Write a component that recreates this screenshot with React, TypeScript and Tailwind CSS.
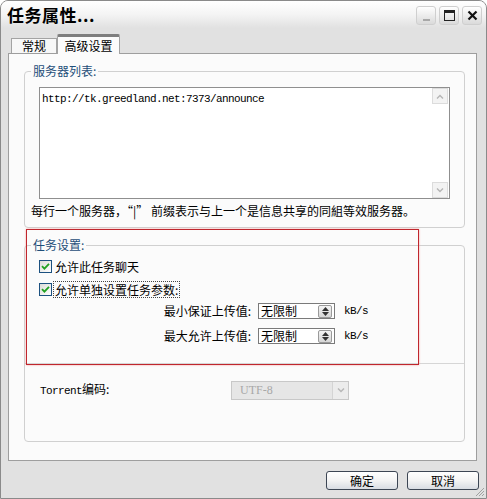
import React from "react";

const CheckBox = () => (
  <span className="w-[13px] h-[13px] shrink-0 border border-[#1c5180] bg-linear-to-br from-[#dcdcd7] to-white flex items-center justify-center">
    <svg width="9" height="9" viewBox="0 0 9 9">
      <path d="M1 4.2 L3.4 6.6 L8 1.8" stroke="#21a121" strokeWidth="1.8" fill="none" />
    </svg>
  </span>
);

const SpinButton = () => (
  <span className="w-[14px] h-[13px] mr-[2px] rounded-[2px] border border-[#9a9a9a] bg-linear-to-b from-[#f4f4f4] to-[#d6d6d6] flex flex-col items-center justify-center gap-[1px]">
    <svg width="7" height="4" viewBox="0 0 7 4"><path d="M0 4 L3.5 0 L7 4Z" fill="#333" /></svg>
    <svg width="7" height="4" viewBox="0 0 7 4"><path d="M0 0 L3.5 4 L7 0Z" fill="#333" /></svg>
  </span>
);

const SpinRow = ({ label }: { label: string }) => (
  <div className="flex items-center h-[16px]">
    <span className="w-[227px] text-right pr-[1px] leading-[16px]">{label}</span>
    <div className="ml-[6px] w-[77px] h-[16px] border border-[#7a7a7a] bg-white flex items-center justify-between">
      <span className="pl-[2px] leading-[14px]">无限制</span>
      <SpinButton />
    </div>
    <span className="ml-[9px] font-['Liberation_Mono',monospace] text-[11px] tracking-[-0.6px]">kB/s</span>
  </div>
);

const GroupLabel = ({ children }: { children: React.ReactNode }) => (
  <span className="absolute -top-[8px] left-[6px] px-[2px] bg-[#fbfbfb] text-[#1f4e79] leading-[14px]">{children}</span>
);

const TitleButton = ({ children }: { children: React.ReactNode }) => (
  <span className="w-[20px] h-[19px] rounded-[3px] border border-[#cfcfcf] bg-linear-to-b from-white to-[#dadada] flex items-center justify-center">
    {children}
  </span>
);

export default function App() {
  return (
    <div className="w-[487px] h-[499px] bg-white">
      <div className="relative w-[487px] h-[499px] border border-[#8a8a8a] rounded-t-[8px] bg-[#e1e1e1] overflow-hidden flex flex-col font-['Noto_Sans_CJK_SC',sans-serif] text-[12px] text-black">
        {/* title bar */}
        <div className="h-[27px] shrink-0 flex items-center justify-between pl-[6px] pr-[4px] bg-linear-to-b from-white via-[#f4f4f4] to-[#e1e1e1]">
          <span className="text-[17px] font-bold leading-[20px] tracking-[0.5px]">任务属性...</span>
          <div className="flex items-center gap-[3px] pt-[1px]">
            <TitleButton>
              <span className="w-[7px] h-[2px] bg-[#a8a8a8] mt-[9px]" />
            </TitleButton>
            <TitleButton>
              <span className="w-[11px] h-[11px] border border-[#222] border-t-[3px]" />
            </TitleButton>
            <TitleButton>
              <svg width="11" height="11" viewBox="0 0 11 11">
                <path d="M1.5 1.5 L9.5 9.5 M9.5 1.5 L1.5 9.5" stroke="#111" strokeWidth="2.2" />
              </svg>
            </TitleButton>
          </div>
        </div>

        {/* body */}
        <div className="flex-1 flex flex-col px-[7px] pt-[6px]">
          {/* tabs */}
          <div className="flex items-end pl-[3px] h-[19px]">
            <div className="w-[46px] h-[15px] border border-b-0 border-[#a3a3a3] bg-[#f7f7f7] flex items-center justify-center leading-[14px]">常规</div>
            <div className="relative z-10 -mb-px w-[63px] h-[20px] border-x border-[#a3a3a3] border-t-[3px] border-t-[#7e7e7e] rounded-t-[2px] bg-[#fbfbfb] flex items-center justify-center leading-[14px]">高级设置</div>
          </div>

          {/* panel */}
          <div className="relative w-[469px] h-[408px] border border-[#9e9e9e] bg-[#fbfbfb] px-[15px] pt-[17px] flex flex-col">
            {/* servers */}
            <div className="relative w-[441px] h-[157px] border border-[#d0d0d0] rounded-[4px] pt-[15px] pl-[14px]">
              <GroupLabel>服务器列表:</GroupLabel>
              <div className="w-[411px] h-[112px] border border-[#8f8f8f] bg-white flex">
                <div className="flex-1 pl-[2px] pt-[4px] font-['Liberation_Mono',monospace] text-[11px] tracking-[-0.6px] leading-[14px]">
                  http://tk.greedland.net:7373/announce
                </div>
                <div className="w-[17px] flex flex-col justify-between py-[0px] pr-[1px]">
                  <span className="w-[16px] h-[16px] border border-[#dcdcdc] bg-[#f3f3f3] flex items-center justify-center">
                    <svg width="8" height="5" viewBox="0 0 8 5"><path d="M1 4.5 L4 1.5 L7 4.5" stroke="#b5b5b5" strokeWidth="1.4" fill="none" /></svg>
                  </span>
                  <span className="w-[16px] h-[16px] border border-[#dcdcdc] bg-[#f3f3f3] flex items-center justify-center">
                    <svg width="8" height="5" viewBox="0 0 8 5"><path d="M1 0.5 L4 3.5 L7 0.5" stroke="#b5b5b5" strokeWidth="1.4" fill="none" /></svg>
                  </span>
                </div>
              </div>
              <p className="-ml-[8px] mt-[5px] leading-[14px] whitespace-nowrap">每行一个服务器，“|” 前缀表示与上一个是信息共享的同組等效服务器。</p>
            </div>

            {/* task settings */}
            <div className="relative mt-[17px] w-[441px] h-[197px] border border-[#d0d0d0] rounded-[4px] flex flex-col">
              <GroupLabel>任务设置:</GroupLabel>
              <div className="pl-[14px] pt-[14px] flex flex-col">
                <label className="flex items-center h-[13px]">
                  <CheckBox />
                  <span className="ml-[3px] leading-[14px]">允许此任务聊天</span>
                </label>
                <label className="flex items-center h-[13px] mt-[10px]">
                  <CheckBox />
                  <span className="ml-[2px] px-[1px] leading-[15px] outline outline-1 outline-dotted outline-[#444]">允许单独设置任务参数:</span>
                </label>
              </div>
              <div className="mt-[7px] flex flex-col gap-[9px]">
                <SpinRow label="最小保证上传值:" />
                <SpinRow label="最大允许上传值:" />
              </div>
              <div className="mt-[19px] border-t border-[#d6d6d6] pl-[15px] pt-[15px] flex items-center">
                <span className="w-[191px] leading-[19px]">
                  <span className="font-['Liberation_Mono',monospace] text-[11px] tracking-[-0.6px]">Torrent</span>编码:
                </span>
                <div className="w-[118px] h-[19px] border border-[#c8c8c8] bg-[#e6e6e6] flex items-center justify-between">
                  <span className="pl-[8px] font-['Liberation_Serif',serif] text-[12px] text-[#a8a8a8]">UTF-8</span>
                  <span className="w-[16px] h-[17px] border-l border-[#d4d4d4] bg-[#ececec] flex items-center justify-center">
                    <svg width="8" height="5" viewBox="0 0 8 5"><path d="M1 0.5 L4 3.5 L7 0.5" stroke="#b8b8b8" strokeWidth="1.5" fill="none" /></svg>
                  </span>
                </div>
              </div>
            </div>

            {/* red highlight annotation */}
            <div className="absolute left-[17px] top-[175px] w-[393px] h-[136px] border border-[#c0262d] shadow-[0_0_2px_#f3a3a3] pointer-events-none" />
          </div>

          {/* buttons */}
          <div className="mt-[10px] flex justify-end gap-[9px]">
            <button className="w-[72px] h-[19px] rounded-[3px] border border-[#3d4654] bg-linear-to-b from-white via-[#f4f4f4] to-[#d9dde3] leading-[16px]">确定</button>
            <button className="w-[72px] h-[19px] rounded-[3px] border border-[#3d4654] bg-linear-to-b from-white via-[#f4f4f4] to-[#d9dde3] leading-[16px]">取消</button>
          </div>
        </div>

        {/* resize grip */}
        <svg className="absolute right-[1px] bottom-[1px]" width="12" height="12" viewBox="0 0 12 12">
          <path d="M11 3 L3 11 M11 6 L6 11 M11 9 L9 11" stroke="#a0a0a0" strokeWidth="1" />
        </svg>
      </div>
    </div>
  );
}
